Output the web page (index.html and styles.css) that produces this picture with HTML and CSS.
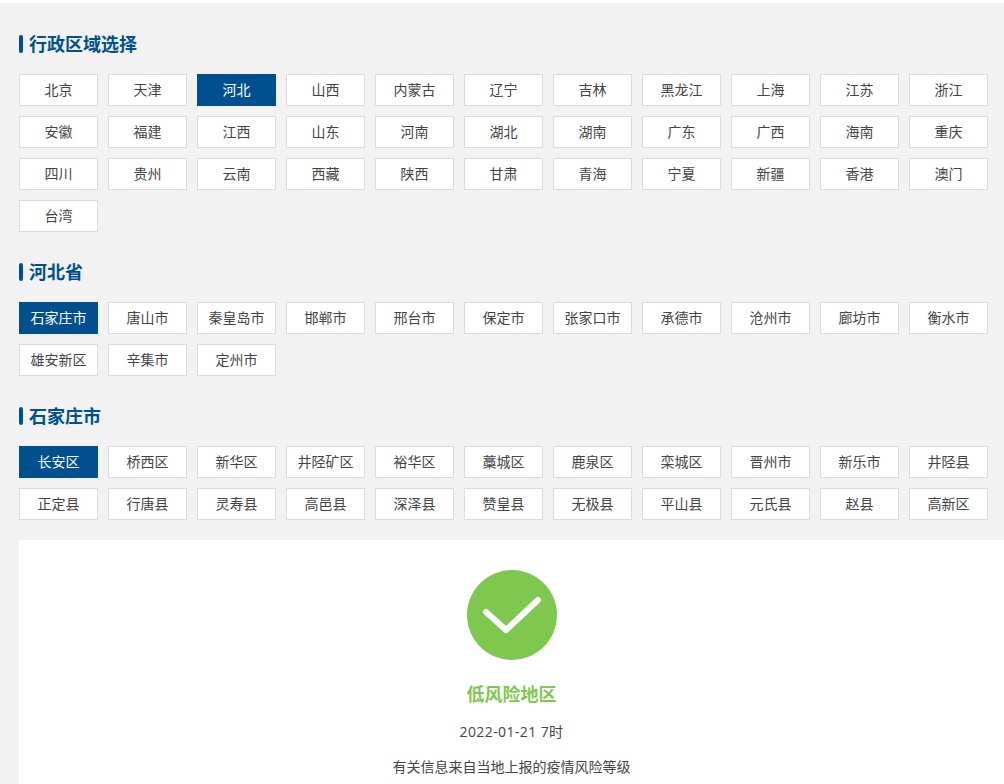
FILE: index.html
```html
<!DOCTYPE html>
<html lang="zh-CN">
<head>
    <meta charset="UTF-8">
    <meta name="viewport" content="width=device-width, initial-scale=1.0">
    <link rel="stylesheet" href="styles.css">
    <title>疫情风险等级查询</title>
</head>
<body>
    <div class="container">
        <h2 class="title">行政区域选择</h2>
        <div class="area-list">
            <a class="area">北京</a><a class="area">天津</a><a class="area active">河北</a><a class="area">山西</a><a class="area">内蒙古</a><a class="area">辽宁</a><a class="area">吉林</a><a class="area">黑龙江</a><a class="area">上海</a><a class="area">江苏</a><a class="area">浙江</a>
            <a class="area">安徽</a><a class="area">福建</a><a class="area">江西</a><a class="area">山东</a><a class="area">河南</a><a class="area">湖北</a><a class="area">湖南</a><a class="area">广东</a><a class="area">广西</a><a class="area">海南</a><a class="area">重庆</a>
            <a class="area">四川</a><a class="area">贵州</a><a class="area">云南</a><a class="area">西藏</a><a class="area">陕西</a><a class="area">甘肃</a><a class="area">青海</a><a class="area">宁夏</a><a class="area">新疆</a><a class="area">香港</a><a class="area">澳门</a>
            <a class="area">台湾</a>
        </div>

        <h2 class="title">河北省</h2>
        <div class="area-list">
            <a class="area active">石家庄市</a><a class="area">唐山市</a><a class="area">秦皇岛市</a><a class="area">邯郸市</a><a class="area">邢台市</a><a class="area">保定市</a><a class="area">张家口市</a><a class="area">承德市</a><a class="area">沧州市</a><a class="area">廊坊市</a><a class="area">衡水市</a>
            <a class="area">雄安新区</a><a class="area">辛集市</a><a class="area">定州市</a>
        </div>

        <h2 class="title">石家庄市</h2>
        <div class="area-list">
            <a class="area active">长安区</a><a class="area">桥西区</a><a class="area">新华区</a><a class="area">井陉矿区</a><a class="area">裕华区</a><a class="area">藁城区</a><a class="area">鹿泉区</a><a class="area">栾城区</a><a class="area">晋州市</a><a class="area">新乐市</a><a class="area">井陉县</a>
            <a class="area">正定县</a><a class="area">行唐县</a><a class="area">灵寿县</a><a class="area">高邑县</a><a class="area">深泽县</a><a class="area">赞皇县</a><a class="area">无极县</a><a class="area">平山县</a><a class="area">元氏县</a><a class="area">赵县</a><a class="area">高新区</a>
        </div>

        <div class="result">
            <svg class="result-icon" viewBox="0 0 90 90" width="90" height="90">
                <circle cx="45" cy="45" r="45" fill="#7fc850"></circle>
                <path d="M19 42 L39 60 L71 30" fill="none" stroke="#ffffff" stroke-width="6" stroke-linecap="round" stroke-linejoin="round"></path>
            </svg>
            <p class="result-level">低风险地区</p>
            <p class="result-time">2022-01-21 7时</p>
            <p class="result-note">有关信息来自当地上报的疫情风险等级</p>
        </div>
    </div>
</body>
</html>
```

FILE: styles.css
```css
html, body {
    height: 100%;
}

body {
    font-family: "Open Sans", "Noto Sans CJK SC", sans-serif;
    font-size: 14px;
    color: #444444;
    margin: 0;
    padding-top: 3px;
    box-sizing: border-box;
    background-color: #ffffff;
    overflow: hidden;
}

.container {
    height: 100%;
    padding-left: 19px;
    padding-top: 29px;
    box-sizing: border-box;
    background-color: #f2f2f2;
    display: flex;
    flex-direction: column;
}

.title {
    height: 24px;
    line-height: 24px;
    margin: 0 0 18px 0;
    font-size: 18px;
    font-weight: bold;
    color: #00508f;
    display: flex;
    align-items: center;
    gap: 6px;
}

.title::before {
    content: "";
    width: 4px;
    height: 18px;
    border-radius: 2px;
    background-color: #00508f;
}

.area-list {
    display: grid;
    grid-template-columns: repeat(11, 79px);
    grid-auto-rows: 32px;
    gap: 10px;
    margin-bottom: 28px;
}

.area {
    box-sizing: border-box;
    border: 1px solid #dcdcdc;
    background-color: #ffffff;
    text-align: center;
    line-height: 30px;
    cursor: pointer;
}

.active {
    background-color: #00508f;
    border-color: #00508f;
    color: #ffffff;
}

.result {
    flex: 1;
    margin-top: -8px;
    padding-top: 30px;
    background-color: #ffffff;
    text-align: center;
}

.result-icon {
    display: block;
    margin: 0 auto;
}

.result-level {
    margin: 21px 0 0 0;
    line-height: 26px;
    font-size: 18px;
    font-weight: bold;
    color: #7fc850;
}

.result-time {
    margin: 15px 0 0 0;
    line-height: 20px;
    letter-spacing: 0.4px;
}

.result-note {
    margin: 15px 0 0 0;
    line-height: 20px;
}
```
